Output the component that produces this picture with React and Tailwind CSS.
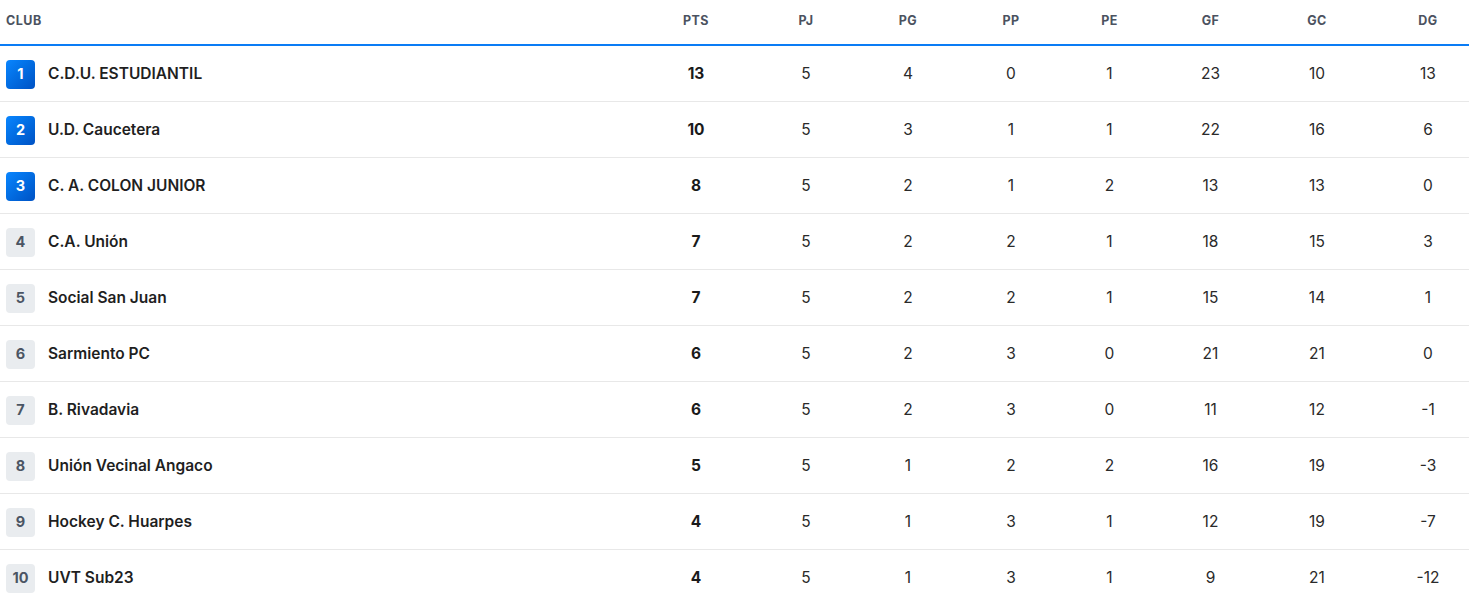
const teams = [
  { pos: 1, name: "C.D.U. ESTUDIANTIL", pts: 13, pj: 5, pg: 4, pp: 0, pe: 1, gf: 23, gc: 10, dg: 13 },
  { pos: 2, name: "U.D. Caucetera", pts: 10, pj: 5, pg: 3, pp: 1, pe: 1, gf: 22, gc: 16, dg: 6 },
  { pos: 3, name: "C. A. COLON JUNIOR", pts: 8, pj: 5, pg: 2, pp: 1, pe: 2, gf: 13, gc: 13, dg: 0 },
  { pos: 4, name: "C.A. Unión", pts: 7, pj: 5, pg: 2, pp: 2, pe: 1, gf: 18, gc: 15, dg: 3 },
  { pos: 5, name: "Social San Juan", pts: 7, pj: 5, pg: 2, pp: 2, pe: 1, gf: 15, gc: 14, dg: 1 },
  { pos: 6, name: "Sarmiento PC", pts: 6, pj: 5, pg: 2, pp: 3, pe: 0, gf: 21, gc: 21, dg: 0 },
  { pos: 7, name: "B. Rivadavia", pts: 6, pj: 5, pg: 2, pp: 3, pe: 0, gf: 11, gc: 12, dg: -1 },
  { pos: 8, name: "Unión Vecinal Angaco", pts: 5, pj: 5, pg: 1, pp: 2, pe: 2, gf: 16, gc: 19, dg: -3 },
  { pos: 9, name: "Hockey C. Huarpes", pts: 4, pj: 5, pg: 1, pp: 3, pe: 1, gf: 12, gc: 19, dg: -7 },
  { pos: 10, name: "UVT Sub23", pts: 4, pj: 5, pg: 1, pp: 3, pe: 1, gf: 9, gc: 21, dg: -12 },
];

// columnas: club + 8 stats (anchos sacados de la captura)
const grid =
  "grid grid-cols-[641px_110px_106px_102px_101px_99px_103px_110px_97px] items-center";

export default function App() {
  return (
    <div
      className="w-[1469px] bg-white text-[#2a2a2a]"
      style={{ fontFamily: "Inter, 'Noto Sans', sans-serif" }}
    >
      {/* Header */}
      <div className={`${grid} h-[46px] border-b-2 border-[#0a7cf5] pb-[2px] text-[12.5px] font-bold uppercase text-[#4b5260] tracking-[0.04em]`}>
        <div className="pl-[6px]">Club</div>
        <div className="text-center">Pts</div>
        <div className="text-center pl-[4px]">PJ</div>
        <div className="text-center">PG</div>
        <div className="text-center pl-[3px]">PP</div>
        <div className="text-center">PE</div>
        <div className="text-center">GF</div>
        <div className="text-center">GC</div>
        <div className="text-center pl-[15px]">DG</div>
      </div>

      {/* Filas */}
      {teams.map((t) => (
        <div
          key={t.pos}
          className={`${grid} h-[56px] border-b border-[#e8e8e8] pt-[1px] text-[15.5px]`}
        >
          <div className="flex items-center gap-[13px] pl-[6px]">
            {t.pos <= 3 ? (
              <span className="flex h-[29px] w-[29px] items-center justify-center rounded-[4px] bg-gradient-to-br from-[#0a86ff] to-[#0052c4] text-[14.5px] font-bold text-white">
                {t.pos}
              </span>
            ) : (
              <span className="flex h-[29px] w-[29px] items-center justify-center rounded-[4px] bg-[#e9ecef] text-[14.5px] font-bold text-[#4b5563]">
                {t.pos}
              </span>
            )}
            <span className="font-semibold text-[#1f1f1f]">{t.name}</span>
          </div>
          <div className="text-center font-bold text-[#1a1a1a]">{t.pts}</div>
          <div className="text-center pl-[4px]">{t.pj}</div>
          <div className="text-center">{t.pg}</div>
          <div className="text-center pl-[3px]">{t.pp}</div>
          <div className="text-center">{t.pe}</div>
          <div className="text-center">{t.gf}</div>
          <div className="text-center">{t.gc}</div>
          <div className="text-center pl-[15px]">{t.dg}</div>
        </div>
      ))}
    </div>
  );
}
